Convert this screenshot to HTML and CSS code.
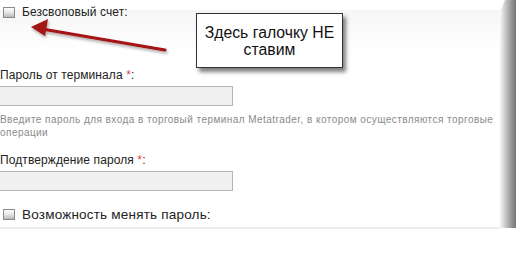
FILE: index.html
```html
<!DOCTYPE html>
<html lang="ru">
<head>
<meta charset="utf-8">
<title>Настройки счета</title>
<link rel="stylesheet" href="styles.css">
</head>
<body>
<div class="page">
  <div class="band"></div>
  <div class="form">
    <div class="check-row first">
      <span class="cb"></span>
      <span class="cb-label">Безсвоповый счет:</span>
    </div>
    <div class="field">
      <div class="label">Пароль от терминала <span class="req">*</span>:</div>
      <div class="input"></div>
      <div class="help">Введите пароль для входа в торговый терминал Metatrader, в котором осуществляются торговые<br>операции</div>
    </div>
    <div class="field second">
      <div class="label">Подтверждение пароля <span class="req">*</span>:</div>
      <div class="input"></div>
    </div>
    <div class="check-row last">
      <span class="cb"></span>
      <span class="cb-label big">Возможность менять пароль:</span>
    </div>
  </div>

  <svg class="arrow" width="180" height="60" viewBox="0 0 180 60">
    <defs>
      <filter id="sh" x="-20%" y="-50%" width="140%" height="200%">
        <feDropShadow dx="1" dy="2" stdDeviation="1.5" flood-color="#000" flood-opacity="0.35"/>
      </filter>
    </defs>
    <g filter="url(#sh)">
      <line x1="165" y1="50" x2="42" y2="29" stroke="#a51212" stroke-width="3.2" stroke-linecap="round"/>
      <polygon points="31,27 48,19 45,36" fill="#a51212"/>
    </g>
  </svg>

  <div class="callout">Здесь галочку НЕ<br>ставим</div>

  <div class="edge"></div>
</div>
</body>
</html>
```

FILE: styles.css
```css
html, body {
  margin: 0;
  padding: 0;
  background: #ffffff;
}

.page {
  position: relative;
  width: 516px;
  height: 258px;
  overflow: hidden;
  font-family: "Liberation Sans", Arial, sans-serif;
  color: #222;
}

.band {
  position: absolute;
  left: 0;
  top: 10px;
  width: 500px;
  height: 40px;
  background: linear-gradient(#f6f6f6, #ffffff);
}

.form {
  position: relative;
  width: 500px;
}

.check-row {
  display: flex;
  align-items: center;
  padding-left: 3px;
}

.check-row.first {
  padding-top: 5px;
  height: 14px;
}

.check-row.last {
  margin-top: 16px;
  height: 15px;
  padding-bottom: 5px;
  border-bottom: 2px solid #ededed;
}

.cb {
  display: inline-block;
  width: 10px;
  height: 9px;
  border: 1px solid #8a8a8a;
  background: linear-gradient(#fdfdfd 0%, #e6e6e6 50%, #b9b9b9 100%);
  margin-right: 7px;
}

.cb-label {
  font-size: 12px;
  line-height: 14px;
  color: #222;
  letter-spacing: 0.1px;
}

.cb-label.big {
  font-size: 13.5px;
  line-height: 15px;
  letter-spacing: 0.2px;
}

.field {
  margin-top: 49px;
}

.field.second {
  margin-top: 14px;
}

.label {
  font-size: 12px;
  line-height: 14px;
  color: #222;
  letter-spacing: 0.1px;
}

.req {
  color: #d44;
}

.input {
  margin-top: 4px;
  width: 232px;
  height: 18px;
  border: 1px solid #b5b5b5;
  border-left: none;
  background: #f0f0f0;
}

.help {
  margin-top: 7px;
  font-size: 10px;
  line-height: 13px;
  color: #8a8a8a;
  letter-spacing: 0.45px;
  white-space: nowrap;
}

.arrow {
  position: absolute;
  left: 0;
  top: 0;
}

.callout {
  position: absolute;
  left: 196px;
  top: 13px;
  width: 145px;
  height: 53px;
  border: 1px solid #333;
  background: #fff;
  box-shadow: 3px 4px 4px rgba(0, 0, 0, 0.5);
  font-size: 15.8px;
  line-height: 17px;
  text-align: center;
  color: #111;
  display: flex;
  align-items: center;
  justify-content: center;
}

.edge {
  position: absolute;
  right: 0;
  top: 0;
  width: 17px;
  height: 228px;
  background: linear-gradient(to right, #ffffff 0%, #cccccc 35%, #949494 75%, #767676 100%);
  clip-path: polygon(6px 0, 100% 0, 100% 100%, 0 100%, 0 14px);
}
```
